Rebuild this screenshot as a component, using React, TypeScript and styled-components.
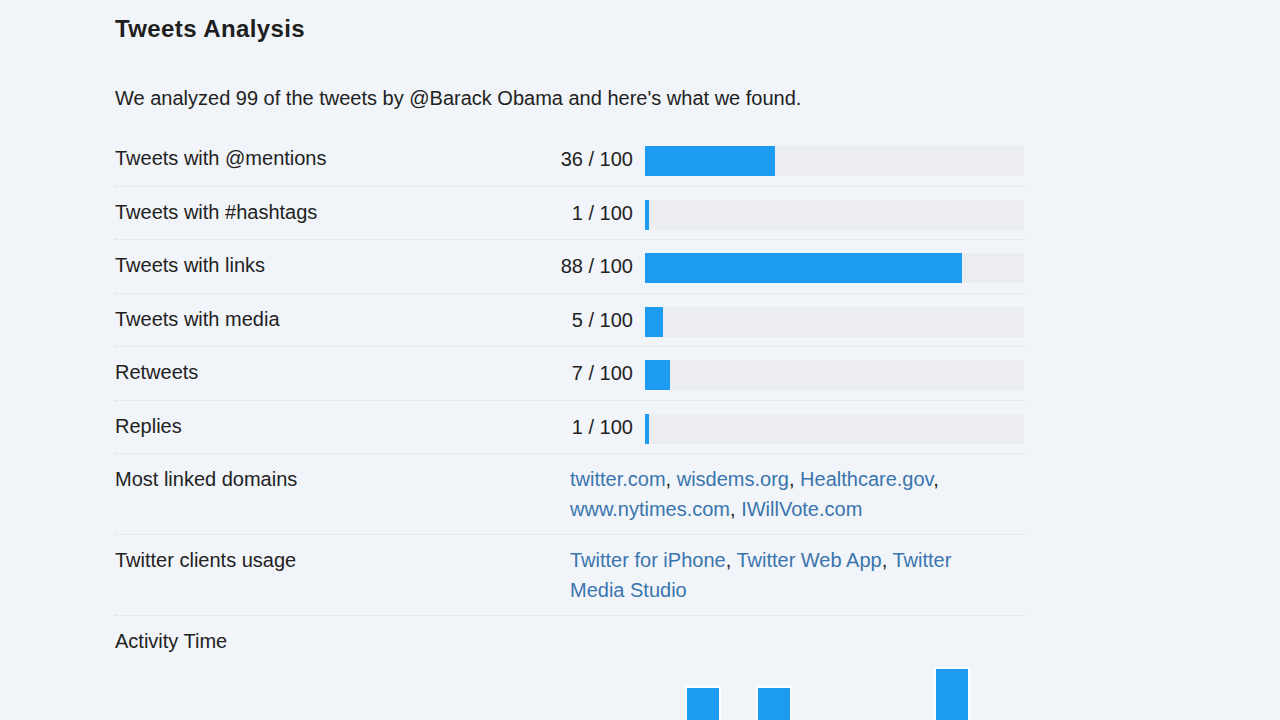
import React from 'react';
import styled, { createGlobalStyle } from 'styled-components';

const GlobalStyle = createGlobalStyle`
    html, body {
        margin: 0;
        padding: 0;
        background: #f1f4f8;
    }
    body {
        font-family: "Liberation Sans", Arial, sans-serif;
        color: #222;
    }
`;

const Page = styled.div`
    width: 910px;
    margin-left: 115px;
    padding-top: 15px;
`;

const Title = styled.h2`
    margin: 0;
    font-size: 24px;
    line-height: 28px;
    font-weight: bold;
    letter-spacing: 0.4px;
    color: #1e1e1e;
`;

const Intro = styled.p`
    margin: 40px 0 20px;
    font-size: 20px;
    line-height: 30px;
`;

const Row = styled.div<{ $bar?: boolean }>`
    display: grid;
    grid-template-columns: ${props => (props.$bar ? '431px 75px 379px' : '455px 400px')};
    column-gap: ${props => (props.$bar ? '12px' : '0')};
    padding: ${props => (props.$bar ? '10px 0 9.5px' : '10px 0 10px')};
    border-bottom: 1px dotted #dadde2;
    font-size: 20px;
    line-height: 30px;
`;

const Label = styled.div``;

const Count = styled.div`
    text-align: right;
    line-height: 32px;
`;

const Track = styled.div`
    margin-top: 3px;
    height: 30px;
    background: #ebedf0;
`;

const Fill = styled.div`
    height: 100%;
    background: #1d9bf0;
`;

const Links = styled.div`
    color: #222;
`;

const Link = styled.a`
    color: #3a75ae;
    text-decoration: none;
`;

const ActivityRow = styled.div`
    padding-top: 10px;
    font-size: 20px;
    line-height: 30px;
`;

const Chart = styled.div`
    display: grid;
    grid-template-columns: repeat(24, 35.6px);
    align-items: end;
    height: 200px;
    margin-top: 4px;
    padding-left: 1px;
`;

const Bar = styled.div`
    justify-self: center;
    width: 32px;
    background: #1d9bf0;
    box-shadow: 0 0 0 2px rgba(255, 255, 255, 0.75);
`;

const stats = [
    { label: 'Tweets with @mentions', value: 36 },
    { label: 'Tweets with #hashtags', value: 1 },
    { label: 'Tweets with links', value: 88 },
    { label: 'Tweets with media', value: 5 },
    { label: 'Retweets', value: 7 },
    { label: 'Replies', value: 1 },
];

const domains = ['twitter.com', 'wisdems.org', 'Healthcare.gov', 'www.nytimes.com', 'IWillVote.com'];
const clients = ['Twitter for iPhone', 'Twitter Web App', 'Twitter Media Studio'];

// hourly activity, relative heights (only the tallest reach into view)
const hours = [20, 14, 10, 6, 4, 3, 5, 8, 12, 18, 25, 30, 38, 45, 50, 60, 172, 95, 172, 120, 110, 130, 100, 191];

const LinkList: React.FC<{ items: string[] }> = ({ items }) => (
    <Links>
        {items.map((item, i) => (
            <React.Fragment key={item}>
                <Link href="#">{item}</Link>
                {i < items.length - 1 ? ', ' : ''}
            </React.Fragment>
        ))}
    </Links>
);

const App: React.FC = () => {
    return (
        <>
            <GlobalStyle />
            <Page>
                <Title>Tweets Analysis</Title>
                <Intro>We analyzed 99 of the tweets by @Barack Obama and here's what we found.</Intro>
                {stats.map(stat => (
                    <Row $bar key={stat.label}>
                        <Label>{stat.label}</Label>
                        <Count>{stat.value} / 100</Count>
                        <Track>
                            <Fill style={{ width: `${stat.value * 0.95}%` }} />
                        </Track>
                    </Row>
                ))}
                <Row>
                    <Label>Most linked domains</Label>
                    <LinkList items={domains} />
                </Row>
                <Row>
                    <Label>Twitter clients usage</Label>
                    <LinkList items={clients} />
                </Row>
                <ActivityRow>
                    <Label>Activity Time</Label>
                    <Chart>
                        {hours.map((h, i) => (
                            <Bar key={i} style={{ height: `${h}px` }} />
                        ))}
                    </Chart>
                </ActivityRow>
            </Page>
        </>
    );
};

export default App;
